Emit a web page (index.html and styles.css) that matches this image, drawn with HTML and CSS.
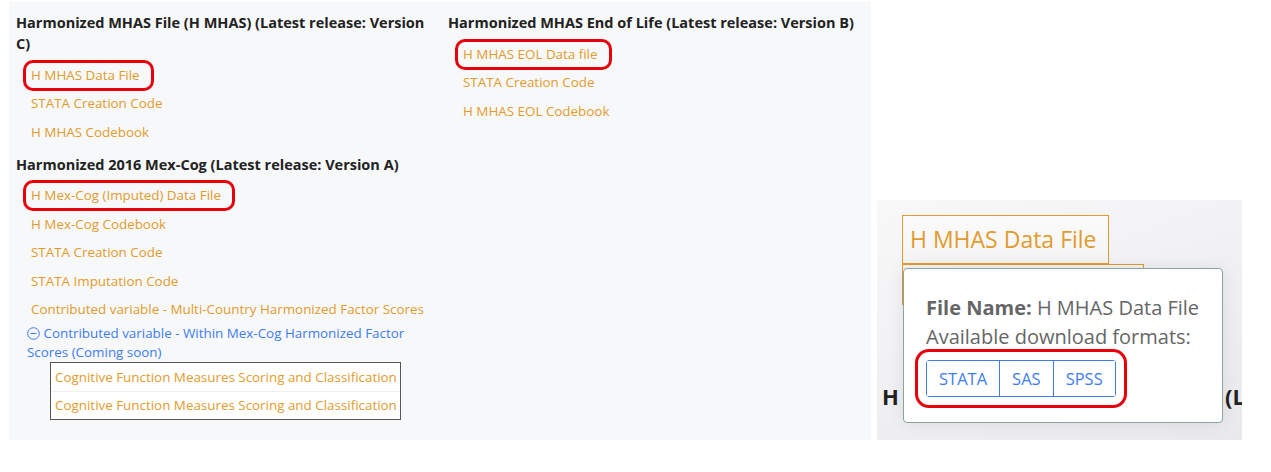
FILE: index.html
```html
<!DOCTYPE html>
<html lang="en">
<head>
  <meta charset="UTF-8">
  <title>Harmonized Data Files</title>
  <link rel="stylesheet" href="styles.css">
</head>
<body>

<div class="page">
  <div class="panel">
    <div class="col">
      <h4>Harmonized MHAS File (H MHAS) (Latest release: Version C)</h4>
      <ul class="links">
        <li><a class="hl" href="#">H MHAS Data File</a></li>
        <li><a href="#">STATA Creation Code</a></li>
        <li><a href="#">H MHAS Codebook</a></li>
      </ul>

      <h4>Harmonized 2016 Mex-Cog (Latest release: Version A)</h4>
      <ul class="links">
        <li><a class="hl" href="#">H Mex-Cog (Imputed) Data File</a></li>
        <li><a href="#">H Mex-Cog Codebook</a></li>
        <li><a href="#">STATA Creation Code</a></li>
        <li><a href="#">STATA Imputation Code</a></li>
        <li><a href="#">Contributed variable - Multi-Country Harmonized Factor Scores</a></li>
      </ul>
      <p class="toggle">
        <svg class="minus" width="13" height="13" viewBox="0 0 13 13"><circle cx="6.5" cy="6.5" r="5.8" fill="none" stroke="#3e7cf4" stroke-width="1"/><line x1="3.5" y1="6.5" x2="9.5" y2="6.5" stroke="#3e7cf4" stroke-width="1"/></svg>
        Contributed variable - Within Mex-Cog Harmonized Factor Scores (Coming soon)
      </p>
      <ul class="sublist">
        <li><a href="#">Cognitive Function Measures Scoring and Classification</a></li>
        <li><a href="#">Cognitive Function Measures Scoring and Classification</a></li>
      </ul>
    </div>

    <div class="col">
      <h4>Harmonized MHAS End of Life (Latest release: Version B)</h4>
      <ul class="links">
        <li><a class="hl" href="#">H MHAS EOL Data file</a></li>
        <li><a href="#">STATA Creation Code</a></li>
        <li><a href="#">H MHAS EOL Codebook</a></li>
      </ul>
    </div>
  </div>

  <div class="side">
    <div class="file-btn">H MHAS Data File</div>
    <div class="file-under"></div>
    <div class="behind">
      <span>H MHAS</span>
      <span>(Latest release: Version C)</span>
    </div>

    <div class="popover">
      <p><b>File Name:</b> H MHAS Data File</p>
      <p>Available download formats:</p>
      <div class="formats">
        <button>STATA</button>
        <button>SAS</button>
        <button>SPSS</button>
      </div>
    </div>
  </div>
</div>

</body>
</html>
```

FILE: styles.css
```css
body {
  margin: 0;
  background: #fff;
  font-family: 'Open Sans', sans-serif;
  color: #222;
}
.page {
  display: flex;
  align-items: flex-start;
  gap: 6px;
  padding: 2px 0 0 9px;
}
.panel {
  width: 848px;
  height: 428px;
  padding: 10px 7px 0 7px;
  background: #f7f8f9;
  display: grid;
  grid-template-columns: 432px 1fr;
}
.col:first-child {
  padding-right: 14px;
}
h4 {
  margin: 0;
  font-size: 14.5px;
  font-weight: 700;
  line-height: 21px;
  color: #222;
}
.links {
  list-style: none;
  margin: 7px 0 7px 0;
  padding: 0 0 0 15px;
}
.links li {
  height: 28.5px;
  display: flex;
  align-items: center;
}
a {
  color: #e39b2d;
  text-decoration: none;
  font-size: 13.4px;
  line-height: 19px;
}
.links a {
  display: inline-block;
}
.hl {
  margin-left: -2px;
  padding: 0 8px 0 2px;
  border-radius: 4px;
  outline: 3px solid #e8000b;
  outline-offset: 3px;
}
.toggle {
  margin: -7px 0 0 11px;
  font-size: 13.4px;
  line-height: 19px;
  color: #3e7cf4;
}
.minus {
  vertical-align: -2px;
}
.sublist {
  list-style: none;
  margin: 0 0 0 34px;
  padding: 0;
  width: 349px;
  border: 1px solid #555;
  background: #fff;
}
.sublist li {
  height: 28px;
  display: flex;
  align-items: center;
  padding-left: 4px;
}
.sublist li + li {
  border-top: 1px solid #f0f0f0;
  height: 27px;
}
.side {
  position: relative;
  margin-top: 198px;
  width: 365px;
  height: 240px;
  overflow: hidden;
  background: linear-gradient(160deg, #f8f8f9 0%, #efeff2 60%, #e9e9ed 100%);
}
.file-btn {
  position: absolute;
  left: 25px;
  top: 15px;
  width: 198px;
  height: 47px;
  padding-left: 7px;
  border: 1px solid #e39b2d;
  color: #e39b2d;
  font-size: 23px;
  line-height: 47px;
  white-space: nowrap;
  background: linear-gradient(#fbfbfb, #f4f4f6);
}
.file-under {
  position: absolute;
  left: 25px;
  top: 64px;
  width: 240px;
  height: 40px;
  border: 1px solid #e39b2d;
  border-bottom: 0;
}
.behind {
  position: absolute;
  left: 5px;
  right: 0;
  top: 181px;
  display: grid;
  grid-template-columns: 1fr 17px;
  font-size: 22px;
  font-weight: 700;
  white-space: nowrap;
  color: #222;
}
.behind span {
  overflow: hidden;
}
.popover {
  position: absolute;
  left: 26px;
  top: 68px;
  width: 296px;
  height: 129px;
  padding: 24px 0 0 22px;
  background: #fff;
  border: 1px solid #89a3a1;
  border-radius: 4px;
  box-shadow: 0 0 18px rgba(0, 0, 0, 0.08);
  color: #666;
  font-size: 20px;
  white-space: nowrap;
}
.popover p {
  margin: 0;
  line-height: 29px;
}
.popover b {
  color: #666;
}
.formats {
  display: inline-flex;
  margin-top: 9px;
  border: 1px solid #3e7cf4;
  border-radius: 3px;
  outline: 3px solid #e8000b;
  outline-offset: 8px;
}
.formats button {
  font-family: inherit;
  font-size: 16.5px;
  color: #3e7cf4;
  background: #fff;
  border: none;
  height: 35px;
  padding: 0 12px;
}
.formats button + button {
  border-left: 1px solid #3e7cf4;
}
```
